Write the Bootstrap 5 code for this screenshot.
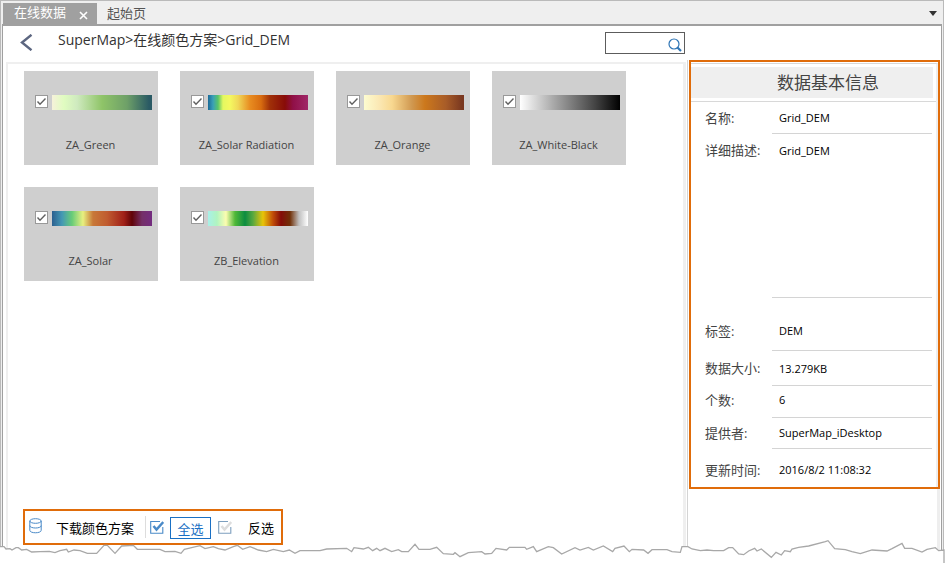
<!DOCTYPE html>
<html lang="zh-CN">
<head>
<meta charset="utf-8">
<meta name="viewport" content="width=device-width, initial-scale=1">
<title>在线数据</title>
<link href="https://cdn.jsdelivr.net/npm/bootstrap@5.3.0/dist/css/bootstrap.min.css" rel="stylesheet">
<style>
body { font-family: "Open Sans", "Noto Sans CJK SC", sans-serif; font-size: 13px; line-height: 20px; color: #444; background: #fff; }
button { background: none; border: 0; padding: 0; color: inherit; }
.app-window { min-height: 100vh; margin-right: 8px; padding: 2px 1px 0 2px; background: #efefef; border: 1px solid #bababa; border-bottom: 0; }
.tab-strip { height: 21px; line-height: 18px; }
.tab-on { background: #a0a0a0; color: #fff; width: 94px; padding: 0 9px 0 11px; }
.tab-off { color: #555; padding: 0 0 2px 10px; }
.tab-more { padding-right: 5px; }
.page-body { border: 1px solid #a0a0a0; border-top-width: 2px; border-bottom: 0; background: #fff; margin-left: -1px; }
.top-bar { height: 34px; padding-left: 17px; }
.crumbs { padding-left: 25px; font-size: 14px; color: #333; }
.find-box { width: 80px; height: 22px; border: 1px solid #5c5c5c; margin: 6px 256px 0 0; }
.find-box input { width: 60px; border: 0; outline: 0; background: none; font-size: 12px; }
.find-box button { padding: 3px 2px 0 0; }
.schemes { border: 2px solid #efefef; border-right-width: 3px; border-bottom: 0; margin: 2px 1px 0 3px; padding-bottom: 18px; }
.tile-list { gap: 22px; padding: 7px 16px 16px; }
.tile { width: 134px; height: 94px; background: #cfcfcf; padding: 24px 6px 0 11px; }
.tile .form-check-input { width: 13px; height: 13px; margin: 0; border: 1px solid #999; border-radius: 0; background-color: #fff; flex: none; }
.tile .form-check-input:checked { background-image: url("data:image/svg+xml,%3Csvg xmlns='http://www.w3.org/2000/svg' viewBox='0 0 11 11'%3E%3Cpath d='M1.5 5.5L4 8.2L9.5 2.5' fill='none' stroke='%23606060' stroke-width='1.4'/%3E%3C/svg%3E"); }
.ramp { width: 100px; height: 15px; }
.tile-name { font-size: 11px; line-height: 16px; padding-top: 27px; margin-left: -6px; }
.ramp-green { background: linear-gradient(90deg,#f6f2da,#e0fcc0 12%,#cfeabf 25%,#8fc468 50%,#6ea068 75%,#2a5a64 97%); }
.ramp-radiation { background: linear-gradient(90deg,#1a6a98,#3aa0b8 5%,#58c468 10%,#e4f860 15%,#f4f860 22%,#f0d858 30%,#e88c20 42%,#d86c10 53%,#a03008 62%,#880c08 77%,#901048 85%,#a02868); }
.ramp-orange { background: linear-gradient(90deg,#fdfcd0,#fbe8b4 15%,#f8d890 28%,#d09850 48%,#cc781c 61%,#a85c28 82%,#7a3820 98%); }
.ramp-gray { background: linear-gradient(90deg,#fff,#aaa 33%,#444 75%,#000); }
.ramp-solar { background: linear-gradient(90deg,#2c6090,#4498b4 10%,#68cc78 20%,#e8f080 31%,#c87838 41%,#c05c30 55%,#a02018 72%,#600408 80%,#743068 90%,#742c80); }
.ramp-elevation { background: linear-gradient(90deg,#a8f0e8,#b0f4c0 9%,#fcfcb0 18%,#50b838 27%,#0c8c40 37%,#58a840 45%,#e8c408 55%,#c04c08 65%,#840c08 73%,#703008 82%,#c0c0c0 91%,#fff); }
.actions { border: 2px solid #e06c0a; width: 260px; height: 36px; margin-left: 15px; padding-left: 4px; color: #000; }
.actions button { padding-top: 2px; }
.act-load { width: 105px; }
.act-rule { width: 1px; height: 22px; background: #ddd; margin: 0 4px 0 11px; }
.actions .act-all { width: 41px; height: 22px; line-height: 18px; border: 1px solid #1a70c4; color: #1a70c4; margin: 1px 7px 0 6px; }
.act-invert { margin-left: 16px; }
.info-side { width: 254px; flex: none; border-left: 1px solid #d4d4d4; padding: 0 1px; }
.info-frame { border: 2px solid #e06c0a; height: 429px; }
.info-inner { border-right: 2px solid #eee; border-top: 1px solid #d8d8d8; margin-top: 1px; height: 424px; }
.info-title { background: #efefef; height: 31px; margin: 3px 3px 3px 0; padding-left: 32px; font-size: 17px; line-height: 31px; color: #444; }
.info-rows { border-top: 1px solid #d8d8d8; }
.info-row { padding: 0 4px 0 14px; }
.info-row dt { width: 67px; font-weight: 400; flex: none; }
.info-row dd { flex: 1; margin: 0; padding-left: 7px; font-size: 11px; color: #000; border-bottom: 1px solid #d4d4d4; }
.info-row:last-child dd { border: 0; }
.row-name { height: 32px; line-height: 32px; }
.row-size { height: 35px; line-height: 35px; }
.row-desc { height: 164px; line-height: 33px; }
.row-tag { height: 53px; line-height: 26px; }
.row-tag dt, .row-tag dd { padding-top: 20px; }
.row-count { height: 32px; line-height: 28px; }
.row-owner { height: 31px; line-height: 30px; }
.row-last { line-height: 42px; }
.info-rest { border-right: 3px solid #eee; }
.torn { height: 30px; width: 100%; }
.torn path { fill: #fff; stroke: #a8a8a8; stroke-width: 1.3; vector-effect: non-scaling-stroke; }
</style>
<script src="https://cdn.jsdelivr.net/npm/bootstrap@5.3.0/dist/js/bootstrap.bundle.min.js"></script>
</head>
<body>
<div class="app-window d-flex flex-column">
  <nav class="tab-strip d-flex align-items-stretch">
    <div class="tab-on d-flex justify-content-between align-items-start">
      <span>在线数据</span>
      <button type="button" class="d-flex pt-2" aria-label="关闭"><svg width="9" height="9" viewBox="0 0 9 9"><path d="M1 1L8 8M8 1L1 8" stroke="#fff" stroke-width="1.6"/></svg></button>
    </div>
    <button type="button" class="tab-off">起始页</button>
    <button type="button" class="tab-more ms-auto d-flex align-items-center" aria-label="更多"><svg width="8" height="5" viewBox="0 0 8 5"><path d="M0 0H8L4 5Z" fill="#333"/></svg></button>
  </nav>
  <div class="page-body d-flex flex-column flex-grow-1">
    <header class="top-bar d-flex align-items-start">
      <div class="d-flex align-items-start pt-1">
        <button type="button" class="d-flex pt-1" aria-label="返回"><svg width="13" height="17" viewBox="0 0 13 17"><path d="M11.5 .8L2 8.5L11.5 16.2" fill="none" stroke="#5c6680" stroke-width="2.4"/></svg></button>
        <div class="crumbs">SuperMap&gt;在线颜色方案&gt;Grid_DEM</div>
      </div>
      <form class="find-box d-flex align-items-center ms-auto">
        <input type="text" class="p-0" aria-label="搜索">
        <button type="button" class="d-flex ms-auto" aria-label="查找"><svg width="14" height="14" viewBox="0 0 14 14"><circle cx="6" cy="6" r="5" fill="none" stroke="#2f75b5" stroke-width="1.2"/><path d="M9.5 9.5L13 13" stroke="#2f75b5" stroke-width="2.2"/></svg></button>
      </form>
    </header>
    <div class="d-flex flex-grow-1">
      <main class="schemes d-flex flex-column flex-grow-1">
        <div class="tile-list d-flex flex-wrap">
          <label class="tile"><span class="d-flex gap-1"><input class="form-check-input" type="checkbox" checked><span class="ramp ramp-green"></span></span><span class="tile-name d-block text-center">ZA_Green</span></label>
          <label class="tile"><span class="d-flex gap-1"><input class="form-check-input" type="checkbox" checked><span class="ramp ramp-radiation"></span></span><span class="tile-name d-block text-center">ZA_Solar Radiation</span></label>
          <label class="tile"><span class="d-flex gap-1"><input class="form-check-input" type="checkbox" checked><span class="ramp ramp-orange"></span></span><span class="tile-name d-block text-center">ZA_Orange</span></label>
          <label class="tile"><span class="d-flex gap-1"><input class="form-check-input" type="checkbox" checked><span class="ramp ramp-gray"></span></span><span class="tile-name d-block text-center">ZA_White-Black</span></label>
          <label class="tile"><span class="d-flex gap-1"><input class="form-check-input" type="checkbox" checked><span class="ramp ramp-solar"></span></span><span class="tile-name d-block text-center">ZA_Solar</span></label>
          <label class="tile"><span class="d-flex gap-1"><input class="form-check-input" type="checkbox" checked><span class="ramp ramp-elevation"></span></span><span class="tile-name d-block text-center">ZB_Elevation</span></label>
        </div>
        <div class="actions d-flex align-items-center mt-auto">
          <button type="button" class="act-load d-flex align-items-start justify-content-between"><svg width="13" height="16" viewBox="0 0 13 16" fill="none" stroke="#4a8ac8" stroke-width="1"><ellipse cx="6.5" cy="3" rx="5.7" ry="2.3"/><path d="M.8 3V12.3C.8 15.6 12.2 15.6 12.2 12.3V3M.8 7.6C.8 10.8 12.2 10.8 12.2 7.6"/></svg><span>下载颜色方案</span></button>
          <span class="act-rule"></span>
          <svg width="14" height="14" viewBox="0 0 14 14" fill="none"><path d="M10 1.5H.7V13.3H12.8V7" stroke="#4a8ac8" stroke-width="1.1"/><path d="M3.5 6L6.5 9.5L13.3 2" stroke="#4a8ac8" stroke-width="2.5"/></svg>
          <button type="button" class="act-all">全选</button>
          <svg width="14" height="14" viewBox="0 0 14 14" fill="none"><path d="M10 1.5H.7V13.3H12.8V7" stroke="#7d9fbe" stroke-width="1.1"/><path d="M3.5 6L6.5 9.5L13.3 2" stroke="#ddd" stroke-width="2.5"/></svg>
          <button type="button" class="act-invert">反选</button>
        </div>
      </main>
      <aside class="info-side d-flex flex-column">
        <section class="info-frame">
          <div class="info-inner">
            <h2 class="info-title text-center fw-normal">数据基本信息</h2>
            <dl class="info-rows mb-0">
              <div class="info-row row-name d-flex"><dt>名称:</dt><dd>Grid_DEM</dd></div>
              <div class="info-row row-desc d-flex"><dt>详细描述:</dt><dd>Grid_DEM</dd></div>
              <div class="info-row row-tag d-flex"><dt>标签:</dt><dd>DEM</dd></div>
              <div class="info-row row-size d-flex"><dt>数据大小:</dt><dd>13.279KB</dd></div>
              <div class="info-row row-count d-flex"><dt>个数:</dt><dd>6</dd></div>
              <div class="info-row row-owner d-flex"><dt>提供者:</dt><dd>SuperMap_iDesktop</dd></div>
              <div class="info-row row-last d-flex"><dt>更新时间:</dt><dd>2016/8/2 11:08:32</dd></div>
            </dl>
          </div>
        </section>
        <div class="info-rest flex-grow-1"></div>
      </aside>
    </div>
  </div>
</div>
<svg class="torn position-absolute bottom-0 start-0" viewBox="0 0 2856 90" preserveAspectRatio="none" aria-hidden="true">
  <path transform="translate(0,-99)" d="M-10 300V140H12L18 147L30 146L36 150L48 143H55L65 150L80 148L95 156L120 155L148 154L165 158L180 152L200 148L205 156L222 150L240 152L262 160H290L312 136H322L345 160L365 138L400 136L412 148H480L495 155L525 154L543 160L553 148L600 137L615 146L640 140L655 146L675 150L700 140L712 136L728 148L750 140L775 150L800 155L820 148L850 155L868 150L885 160L900 152H960
  L980 147L1040 145L1055 155L1062 143L1090 147L1105 142L1118 152L1130 145L1140 152L1155 145L1175 155L1195 149L1205 155H1225L1245 133L1257 148H1290L1310 142L1330 161L1360 163L1365 158L1380 170L1405 158L1445 155L1455 162L1475 160L1488 145L1520 150L1528 142H1575L1580 148L1600 140L1610 155L1645 140L1660 143L1685 162L1725 143L1740 150L1765 142L1780 150L1810 138L1838 155L1845 145L1872 138L1888 155
  L1896 148L1931 150L1944 160L1956 149H2001L2016 155L2041 157L2046 140H2064L2076 147L2101 152L2121 150L2141 152H2171L2186 143H2198L2216 162L2231 164L2246 153L2264 145L2271 153L2284 147L2314 172L2328 157L2344 165L2354 152L2371 155L2376 147L2396 142L2426 138L2476 125L2484 122L2504 146L2536 149L2556 155L2581 161L2616 150L2661 153L2676 146L2706 130L2714 145H2736L2766 156L2781 148L2806 143L2816 152L2832 150V300"/>
</svg>
</body>
</html>
